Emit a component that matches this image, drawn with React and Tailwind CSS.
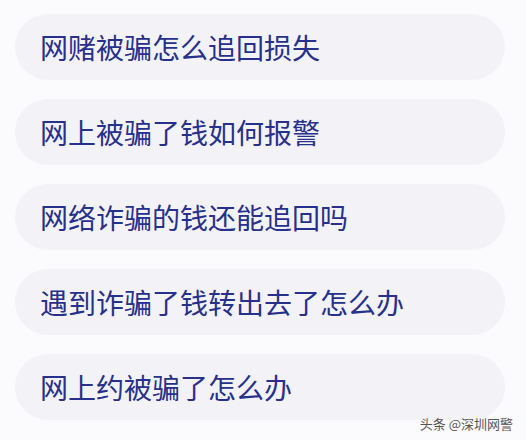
import React from 'react';

const items = [
  '网赌被骗怎么追回损失',
  '网上被骗了钱如何报警',
  '网络诈骗的钱还能追回吗',
  '遇到诈骗了钱转出去了怎么办',
  '网上约被骗了怎么办',
];

export default function App() {
  return (
    <div
      className="relative w-[526px] h-[440px] overflow-hidden bg-[#fbfbfd] pt-[14px] px-[15px]"
      style={{ fontFamily: '"Noto Sans CJK SC", "Noto Sans", sans-serif' }}
    >
      <div className="flex flex-col gap-[19px]">
        {items.map((t) => (
          <div
            key={t}
            className="h-[66px] w-[490px] rounded-full bg-[#f3f3f7] flex items-center pl-[25px] text-[28px] leading-none text-[#27308a]"
          >
            {t}
          </div>
        ))}
      </div>
      {/* watermark */}
      <div className="absolute right-[13px] bottom-[10px] text-[13px] leading-none text-[#555]">
        头条 @深圳网警
      </div>
    </div>
  );
}
